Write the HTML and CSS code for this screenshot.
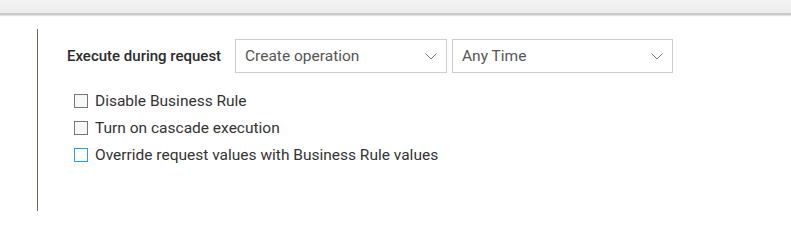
FILE: index.html
```html
<!DOCTYPE html>
<html lang="en">
<head>
  <meta charset="UTF-8" />
  <title>Business Rule</title>
  <link rel="stylesheet" href="styles.css">
</head>
<body>
  <div class="top-bar"></div>

  <div class="rule-panel">
    <div class="request-row">
      <label class="request-label">Execute during request</label>
      <div class="select select-op">
        <span>Create operation</span>
        <svg class="chevron" width="12" height="7" viewBox="0 0 12 7"><path d="M0.5 0.5 L6 6 L11.5 0.5" fill="none" stroke="#777" stroke-width="1"/></svg>
      </div>
      <div class="select select-time">
        <span>Any Time</span>
        <svg class="chevron" width="12" height="7" viewBox="0 0 12 7"><path d="M0.5 0.5 L6 6 L11.5 0.5" fill="none" stroke="#777" stroke-width="1"/></svg>
      </div>
    </div>

    <div class="options">
      <label class="option"><span class="box"></span>Disable Business Rule</label>
      <label class="option"><span class="box"></span>Turn on cascade execution</label>
      <label class="option"><span class="box box-focus"></span>Override request values with Business Rule values</label>
    </div>
  </div>
</body>
</html>
```

FILE: styles.css
```css
body {
  margin: 0;
  font-family: Roboto, 'Liberation Sans', sans-serif;
  font-size: 15.5px;
  color: #333;
  background: #fff;
}
.top-bar {
  height: 13px;
  background: linear-gradient(#f3f3f3, #ececec);
  border-bottom: 2px solid #c9c9c9;
  box-shadow: 0 1px 1px #e2e2e2;
}
.rule-panel {
  margin: 14px 0 0 37px;
  height: 182px;
  border-left: 1px solid #666b55;
  padding: 10px 0 0 29px;
  box-sizing: border-box;
}
.request-row {
  display: flex;
  align-items: center;
}
.request-label {
  width: 168px;
  font-size: 15px;
  font-weight: 500;
  color: #2b2b2b;
}
.select {
  height: 34px;
  box-sizing: border-box;
  border: 1px solid #ccc;
  display: flex;
  align-items: center;
  justify-content: space-between;
  padding: 0 9px 0 9px;
  color: #555;
}
.select-op {
  width: 212px;
}
.select-time {
  width: 221px;
  margin-left: 5px;
}
.chevron {
  margin-top: 1px;
}
.options {
  margin-top: 14px;
  padding-left: 7px;
}
.option {
  display: flex;
  align-items: center;
  height: 27px;
}
.box {
  width: 12px;
  height: 12px;
  border: 1px solid #777;
  background: #f7f7f7;
  margin-right: 7px;
}
.box-focus {
  border-color: #2d9fdb;
  background: #fff;
}
```
